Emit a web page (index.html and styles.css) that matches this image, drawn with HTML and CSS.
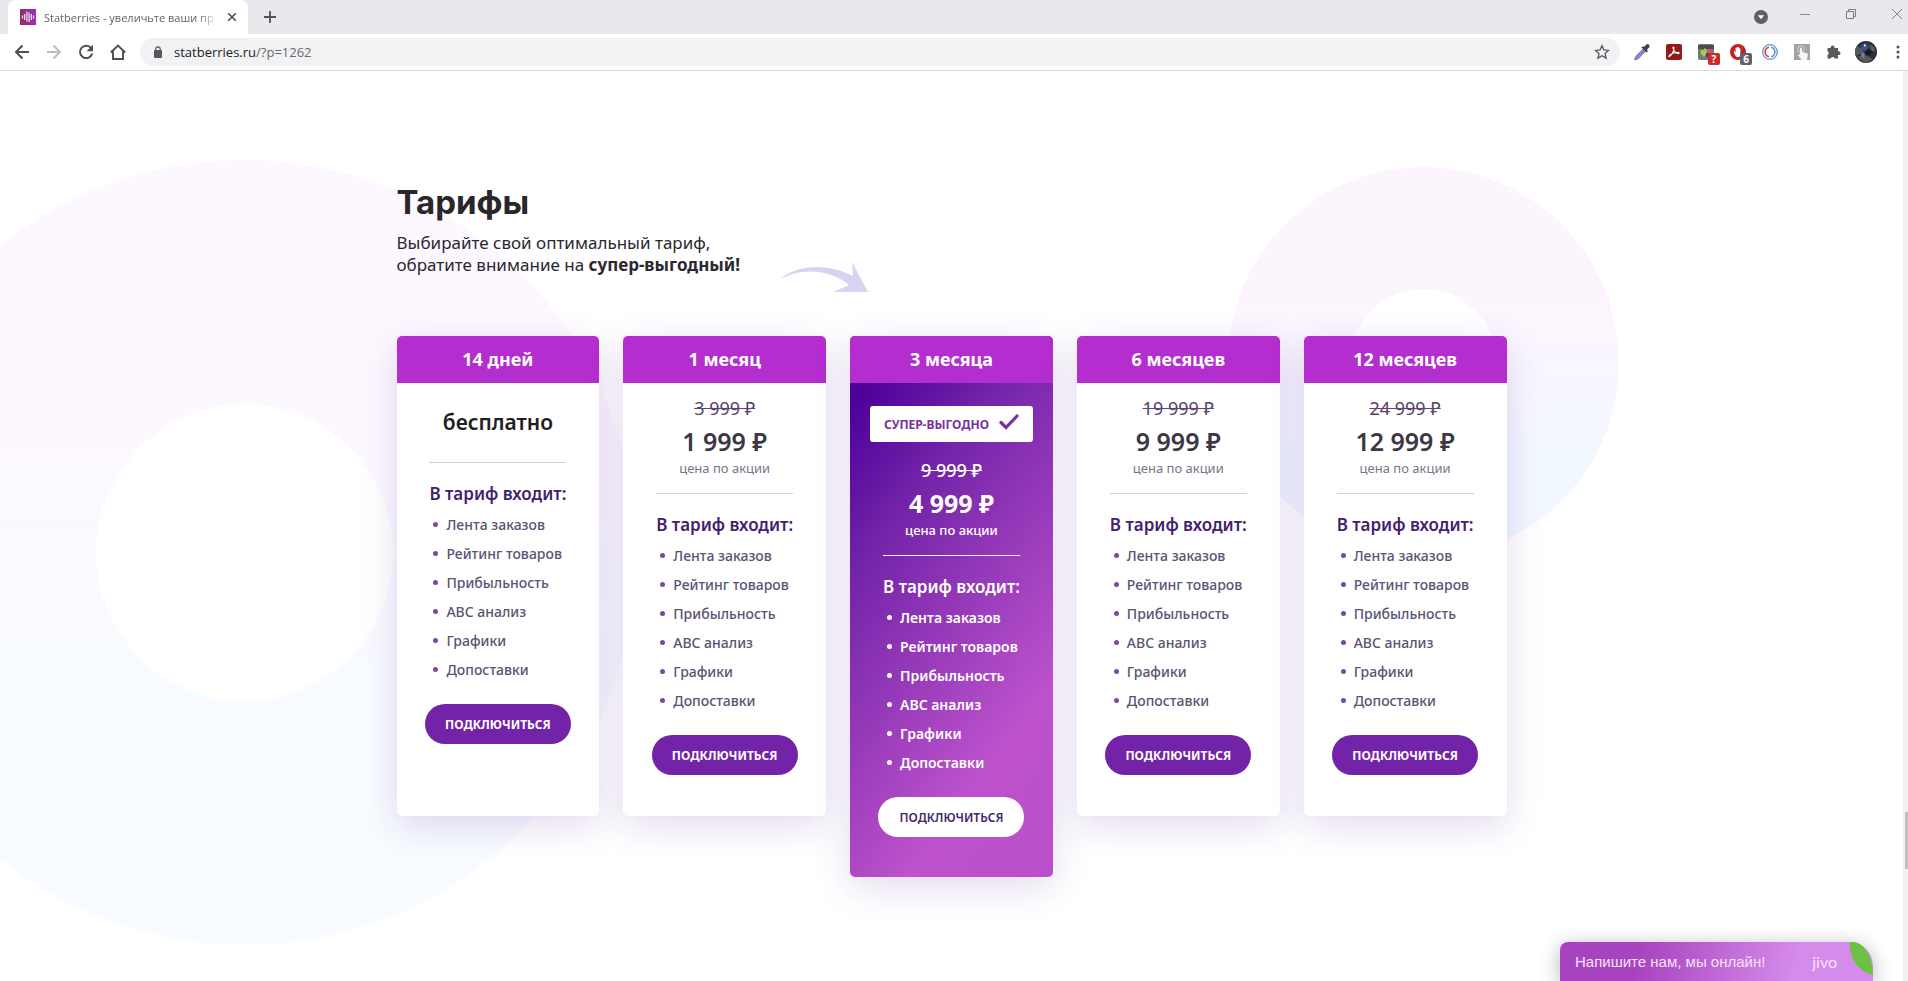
FILE: index.html
```html
<!DOCTYPE html>
<html lang="ru">
<head>
<meta charset="utf-8">
<title>Statberries - увеличьте ваши продажи</title>
<link rel="stylesheet" href="styles.css">
</head>
<body>
<div class="browser">
  <header class="chrome">
    <div class="tabstrip">
      <div class="tab">
        <svg class="favicon" width="16" height="16" viewBox="0 0 16 16"><defs><linearGradient id="fav" x1="0" x2="1"><stop offset="0" stop-color="#8a2f62"/><stop offset="1" stop-color="#a32bc4"/></linearGradient></defs><rect width="16" height="16" fill="url(#fav)"/><path d="M2.500 6.500v3M4.700 5v6M6.900 2.500v10M9.100 3.500v9.500M11.300 5v6M13.500 6.500v3" stroke="#f3d9f3" stroke-width="1.300"/></svg>
        <span class="tab-title">Statberries - увеличьте ваши пр</span>
        <button class="plain" aria-label="Закрыть вкладку"><svg width="10" height="10" viewBox="0 0 10 10"><path d="M1.200 1.200l7.600 7.600M8.800 1.200l-7.600 7.600" stroke="#4b4d51" stroke-width="1.600"/></svg></button>
      </div>
      <button class="plain new-tab" aria-label="Новая вкладка"><svg width="12" height="12" viewBox="0 0 12 12"><path d="M6 0v12M0 6h12" stroke="#505256" stroke-width="1.800"/></svg></button>
      <div class="window-buttons">
        <button class="plain search-tabs" aria-label="Поиск вкладок"><svg width="14" height="14" viewBox="0 0 14 14"><circle cx="7" cy="7" r="7" fill="#5f6064"/><path d="M3.800 5.200h6.400L7 9.300z" fill="#fff"/></svg></button>
        <button class="plain window-button" aria-label="Свернуть"><svg width="10" height="10" viewBox="0 0 10 10"><path d="M0 5.500h10" stroke="#8a8b8f"/></svg></button>
        <button class="plain window-button" aria-label="Развернуть"><svg width="10" height="10" viewBox="0 0 10 10"><path d="M.5 2.500h7v7h-7zM2.500 2.500v-2h7v7h-2" fill="none" stroke="#7c7d81"/></svg></button>
        <button class="plain window-button" aria-label="Закрыть"><svg width="10" height="10" viewBox="0 0 10 10"><path d="M0 0l10 10M10 0L0 10" stroke="#808185"/></svg></button>
      </div>
    </div>
    <div class="toolbar">
      <button class="plain nav" aria-label="Назад"><svg width="16" height="16" viewBox="0 0 16 16"><path d="M15 8H2M8.500 1.500L2 8l6.500 6.500" fill="none" stroke="#4d4f53" stroke-width="2"/></svg></button>
      <button class="plain nav" aria-label="Вперёд"><svg width="16" height="16" viewBox="0 0 16 16"><path d="M1 8h13M7.500 1.500L14 8l-6.500 6.500" fill="none" stroke="#bcbdc0" stroke-width="2"/></svg></button>
      <button class="plain nav" aria-label="Обновить"><svg width="16" height="16" viewBox="0 0 16 16"><path d="M13.200 4.200A6.200 6.200 0 1 0 14.200 9.500" fill="none" stroke="#4d4f53" stroke-width="2"/><path d="M15 .8v6.400H8.600z" fill="#4d4f53"/></svg></button>
      <button class="plain nav" aria-label="Домой"><svg width="16" height="16" viewBox="0 0 16 16"><path d="M.8 8.500L8 1.500l7.200 7M3 7v8h10V7" fill="none" stroke="#4d4f53" stroke-width="1.900"/></svg></button>
      <div class="omnibox">
        <svg width="10" height="12" viewBox="0 0 10 12"><rect x="1" y="4" width="8" height="8" rx="1" fill="#55575b"/><path d="M2.800 5V3a2.200 2.200 0 0 1 4.400 0v2" fill="none" stroke="#55575b" stroke-width="1.200"/></svg>
        <span class="url"><span class="host">statberries.ru</span>/?p=1262</span>
        <button class="plain" aria-label="Добавить в закладки"><svg width="16" height="16" viewBox="0 0 16 16"><path d="M8 1.700l1.900 4.300 4.600.4-3.500 3.100 1.100 4.600L8 11.700l-4.100 2.400L5 9.500 1.500 6.400l4.600-.4z" fill="none" stroke="#55575b" stroke-width="1.300"/></svg></button>
      </div>
      <div class="extensions">
        <button class="plain ext" aria-label="Пипетка"><svg width="18" height="18" viewBox="0 0 18 18"><path d="M10 6l2.500 2.500L5 16l-3 1-.5-.5L2.500 13.500z" fill="#8a86d4" stroke="#6d6aa5" stroke-width=".7"/><path d="M8.500 4.500l5 5 1.500-1.500-1.200-1.200 2.400-2.400a2 2 0 0 0-2.800-2.800L11 4 10 3z" fill="#3f4148"/></svg></button>
        <button class="plain ext" aria-label="Acrobat"><svg width="16" height="16" viewBox="0 0 16 16"><rect width="16" height="16" rx="2" fill="#951a17"/><path d="M3 12.500c2.500-1 5-5 5-8.500 0-1.300-1.200-1.200-1 0 .4 2.800 3 5.600 5.300 5.600 1.300 0 1-1.200-.4-1.200-2.800 0-6 .9-8 2.600-1.100 1-1.300 1.600-.9 1.500z" fill="none" stroke="#fff" stroke-width="1.100"/></svg></button>
        <button class="plain ext" aria-label="Расширение"><svg width="16" height="16" viewBox="0 0 16 16"><rect width="16" height="16" rx="2" fill="#77797a"/><rect y="1" width="16" height="4" fill="#4c4d50"/><path d="M3 6h3V4.500h2V6h1v5H7v1.500H5V11H3z" fill="#9bd238"/><rect x="9" y="5" width="4" height="4" fill="#e64a6a"/><rect x="8" y="9" width="5" height="4" fill="#3a36b0"/></svg><span class="count count-red">?</span></button>
        <button class="plain ext" aria-label="AdBlock"><svg width="16" height="16" viewBox="0 0 16 16"><circle cx="8" cy="8" r="8" fill="#c52125"/><path d="M5 11L3.500 7.500l1-.4L5.500 9V4h1.200v3.500V3h1.300v4.500V3.300h1.200V8V4.500h1.200V10L9.500 13H6.500z" fill="#fff"/></svg><span class="count">6</span></button>
        <button class="plain ext" aria-label="Синхронизация"><svg width="16" height="16" viewBox="0 0 16 16"><circle cx="8" cy="8" r="7.300" fill="none" stroke="#5e9ac9" stroke-width="1.300"/><path d="M7 3.300a4.800 4.800 0 0 0 0 9.400" fill="none" stroke="#d9384a" stroke-width="1.500"/><path d="M9 12.700a4.800 4.800 0 0 0 0-9.400" fill="none" stroke="#6d8fc6" stroke-width="1.500"/></svg></button>
        <button class="plain ext" aria-label="Касание"><svg width="16" height="16" viewBox="0 0 16 16"><rect width="16" height="16" fill="#a3a3a3"/><circle cx="7" cy="5" r="3.300" fill="none" stroke="#d5d5d5"/><path d="M6 4.500a1 1 0 0 1 2 0V8l5 1.300c.8.300 1 .9.800 1.700L13 16H7.500L4 11l1-.8 1 .6z" fill="#f5f5f5"/></svg></button>
        <button class="plain ext" aria-label="Расширения"><svg width="16" height="16" viewBox="0 0 16 16"><path d="M1.500 4h3.300a1.900 1.900 0 1 1 3.600 0H12v3.400a1.900 1.900 0 1 1 0 3.600v3.500H8.700a2 2 0 0 0-3.800 0H1.500v-3.600a2 2 0 0 0 0-3.700z" fill="#57595d"/></svg></button>
        <button class="plain ext" aria-label="Профиль"><svg width="22" height="22" viewBox="0 0 22 22"><defs><clipPath id="av"><circle cx="11" cy="11" r="11"/></clipPath></defs><g clip-path="url(#av)"><rect width="22" height="22" fill="#2b3038"/><path d="M0 5l7 2 2 5-9 3z" fill="#4d5a60"/><path d="M6 4l5-2 3 4-3 4-4-1z" fill="#3d4f90"/><path d="M9 3l2 1-1 2-1-1z" fill="#dfe4ef"/><path d="M12 8l5 2-2 5-5-2z" fill="#171a20"/><path d="M14 3l5 3 1 5-4-2z" fill="#56636a"/><path d="M3 15l7-1 8 4-6 4-7-3z" fill="#5d5a55"/><path d="M7 11l3 2-1 4-3-2z" fill="#6a82bb"/></g></svg></button>
      </div>
      <button class="plain menu" aria-label="Меню"><svg width="4" height="14" viewBox="0 0 4 14"><circle cx="2" cy="2" r="1.500" fill="#505256"/><circle cx="2" cy="7" r="1.500" fill="#505256"/><circle cx="2" cy="12" r="1.500" fill="#505256"/></svg></button>
    </div>
  </header>

  <main class="page">
    <div class="ring ring-left"></div>
    <div class="ring ring-right"></div>

    <section class="pricing">
      <div class="intro">
        <div>
          <h1 class="title">Тарифы</h1>
          <p class="lead">Выбирайте свой оптимальный тариф,<br>обратите внимание на <strong>супер-выгодный!</strong></p>
        </div>
        <svg class="arrow" width="88" height="30" viewBox="0 0 88 30"><path d="M0 17C18 2 48 1 73 14L72 0Q80 15 88 30H53L69 23C50 8 24 5 0 17z" fill="#d8d3f0"/></svg>
      </div>

      <div class="plans">
        <article class="plan">
          <h2 class="plan-name">14 дней</h2>
          <div class="plan-body">
            <p class="free">бесплатно</p>
            <div class="features">
              <h3 class="features-title">В тариф входит:</h3>
              <ul class="feature-list"><li>Лента заказов</li><li>Рейтинг товаров</li><li>Прибыльность</li><li>ABC анализ</li><li>Графики</li><li>Допоставки</li></ul>
            </div>
            <button class="connect">ПОДКЛЮЧИТЬСЯ</button>
          </div>
        </article>
        <article class="plan">
          <h2 class="plan-name">1 месяц</h2>
          <div class="plan-body">
            <div class="price"><s class="old">3 999 ₽</s><strong class="new">1 999 ₽</strong><span class="note">цена по акции</span></div>
            <div class="features">
              <h3 class="features-title">В тариф входит:</h3>
              <ul class="feature-list"><li>Лента заказов</li><li>Рейтинг товаров</li><li>Прибыльность</li><li>ABC анализ</li><li>Графики</li><li>Допоставки</li></ul>
            </div>
            <button class="connect">ПОДКЛЮЧИТЬСЯ</button>
          </div>
        </article>
        <article class="plan plan-best">
          <h2 class="plan-name">3 месяца</h2>
          <div class="plan-body">
            <div class="best"><span>СУПЕР-ВЫГОДНО</span><svg class="check" width="20" height="16" viewBox="0 0 20 16"><path d="M2 8.500l5 5L18 2" fill="none" stroke="#7b2fa0" stroke-width="3.200" stroke-linecap="round"/></svg></div>
            <div class="price"><s class="old">9 999 ₽</s><strong class="new">4 999 ₽</strong><span class="note">цена по акции</span></div>
            <div class="features">
              <h3 class="features-title">В тариф входит:</h3>
              <ul class="feature-list"><li>Лента заказов</li><li>Рейтинг товаров</li><li>Прибыльность</li><li>ABC анализ</li><li>Графики</li><li>Допоставки</li></ul>
            </div>
            <button class="connect">ПОДКЛЮЧИТЬСЯ</button>
          </div>
        </article>
        <article class="plan">
          <h2 class="plan-name">6 месяцев</h2>
          <div class="plan-body">
            <div class="price"><s class="old">19 999 ₽</s><strong class="new">9 999 ₽</strong><span class="note">цена по акции</span></div>
            <div class="features">
              <h3 class="features-title">В тариф входит:</h3>
              <ul class="feature-list"><li>Лента заказов</li><li>Рейтинг товаров</li><li>Прибыльность</li><li>ABC анализ</li><li>Графики</li><li>Допоставки</li></ul>
            </div>
            <button class="connect">ПОДКЛЮЧИТЬСЯ</button>
          </div>
        </article>
        <article class="plan">
          <h2 class="plan-name">12 месяцев</h2>
          <div class="plan-body">
            <div class="price"><s class="old">24 999 ₽</s><strong class="new">12 999 ₽</strong><span class="note">цена по акции</span></div>
            <div class="features">
              <h3 class="features-title">В тариф входит:</h3>
              <ul class="feature-list"><li>Лента заказов</li><li>Рейтинг товаров</li><li>Прибыльность</li><li>ABC анализ</li><li>Графики</li><li>Допоставки</li></ul>
            </div>
            <button class="connect">ПОДКЛЮЧИТЬСЯ</button>
          </div>
        </article>
      </div>
    </section>

    <div class="scrollbar"><div class="thumb"></div></div>

    <button class="chat">
      <span class="chat-text">Напишите нам, мы онлайн!</span>
      <span class="jivo">jivo</span>
      <svg class="leaf" width="23" height="33" viewBox="0 0 23 33"><path d="M0 0h4C15 2 22 13 23 33 9 30-1 18 0 0z" fill="#6cc144"/></svg>
    </button>
  </main>
</div>
</body>
</html>
```

FILE: styles.css
```css
* { box-sizing: border-box; }
body { margin: 0; font-family: "Noto Sans", "Open Sans", sans-serif; color: #2b2730; background: #fff; }
h1, h2, h3, p, ul { margin: 0; padding: 0; }
button { font: inherit; cursor: pointer; }
svg { display: block; }

.browser { display: flex; flex-direction: column; height: 100vh; }
.plain { display: flex; align-items: center; justify-content: center; padding: 0; border: 0; background: none; }

/* Browser frame */
.tabstrip { display: flex; align-items: center; height: 34px; padding: 0 6px 0 8px; background: #e8e9ed; }
.tab { display: flex; align-items: center; gap: 8px; align-self: stretch; width: 240px; padding: 0 11px 0 12px; border-radius: 8px 8px 0 0; background: #fff; }
.favicon { flex: none; }
.tab-title { flex: 1; white-space: nowrap; font: 11px "Open Sans", sans-serif; color: #606266; mask-image: linear-gradient(90deg, #000 88%, transparent); }
.new-tab { margin-left: 16px; }
.window-buttons { display: flex; align-items: center; gap: 36px; margin-left: auto; }
.search-tabs { margin-right: -4px; }
.window-button { margin-bottom: 6px; }
.toolbar { display: flex; align-items: center; height: 37px; padding-left: 6px; border-bottom: 1px solid #d9dadc; background: #fff; }
.nav { width: 32px; height: 32px; }
.omnibox { display: flex; align-items: center; gap: 11px; flex: 1; height: 28px; margin: 0 6px; padding: 0 10px 0 13px; border-radius: 14px; background: #f1f2f4; }
.url { flex: 1; font: 13px "Open Sans", sans-serif; color: #67696d; }
.host { color: #202124; }
.extensions { display: flex; }
.ext { position: relative; width: 32px; height: 32px; }
.count { position: absolute; right: 2px; bottom: 3px; width: 12px; border-radius: 2px; background: #5f6368; color: #fff; font: bold 10px/12px "Open Sans", sans-serif; }
.count-red { background: #cf2a27; }
.menu { width: 20px; margin-left: 6px; }

/* Pricing section */
.page { position: relative; flex: 1; overflow: hidden; padding-right: 5px; }
.ring { position: absolute; border-radius: 50%; background: linear-gradient(#fdf8ff 35%, #f8fbff 65%); }
.ring::after { content: ""; position: absolute; border-radius: 50%; background: #fff; }
.ring-left { left: -148px; top: 89px; width: 785px; height: 785px; }
.ring-left::after { inset: 244px; }
.ring-right { right: 289px; top: 96px; width: 391px; height: 391px; background: linear-gradient(#fdf5fe 35%, #f2f8ff 75%); }
.ring-right::after { inset: 122px; }

.pricing { position: relative; max-width: 1110px; margin: 0 auto; padding-top: 109px; }
.intro { display: flex; align-items: flex-end; gap: 40px; margin-bottom: 60px; }
.title { font: 700 33px/44px Inter, sans-serif; color: #2a2629; }
.lead { margin-top: 8px; font-size: 17px; line-height: 22px; }
.arrow { margin-bottom: -16px; }

.plans { display: grid; grid-template-columns: repeat(5, 1fr); gap: 24px; align-items: start; }
.plan { display: flex; flex-direction: column; min-height: 480px; overflow: hidden; border-radius: 5px; background: #fff; box-shadow: 0 10px 36px rgba(82, 32, 150, 0.16); }
.plan-name { background: #b42dce; color: #fff; font-size: 18px; line-height: 47px; font-weight: 700; text-align: center; }
.plan-body { display: flex; flex-direction: column; align-items: center; flex: 1; padding: 11px 16px 40px; }
.free { padding: 12px 0 24px; font-size: 21px; line-height: 32px; font-weight: 600; color: #211f24; }
.price { display: flex; flex-direction: column; align-items: center; color: #3d3745; padding-bottom: 16px; }
.old { font-size: 18px; line-height: 28px; color: #4f4658; text-decoration-color: #6b3a96; }
.new { font-size: 25px; line-height: 38px; font-weight: 600; }
.note { font-size: 13px; line-height: 17px; color: #77758a; }
.features { border-top: 1px solid #ccd0d9; padding-top: 17px; }
.features-title { margin-bottom: 2px; font-size: 17px; line-height: 28px; font-weight: 600; color: #43216f; }
.feature-list { list-style: none; }
.feature-list li { display: flex; align-items: center; gap: 8px; padding-left: 4px; font-size: 14px; line-height: 29px; font-weight: 500; color: #5b5372; }
.feature-list li::before { content: ""; width: 5px; height: 5px; border-radius: 50%; background: #774aa4; }
.connect { width: 146px; height: 40px; margin-top: 20px; padding: 0; border: 0; border-radius: 20px; background: #7323a7; color: #fff; font-size: 12px; font-weight: 700; }

.plan-best { background: linear-gradient(127deg, #4c0099 8%, #7324a9 30%, #bd52cc 76%, #b950c9 100%); }
.plan-best .plan-body, .plan-best .price, .plan-best .old, .plan-best .note, .plan-best .features-title, .plan-best li { color: #fff; }
.plan-best .old { text-decoration-color: #fff; }
.plan-best .old, .plan-best .note { font-weight: 500; }
.plan-best .new { font-weight: 700; }
.plan-best li { font-weight: 600; }
.plan-best li::before { background: #fff; }
.plan-best .features { border-color: #fff; }
.plan-best .connect { background: #fff; color: #43256c; font-weight: 600; }
.best { display: flex; align-items: center; justify-content: center; gap: 10px; width: 163px; height: 36px; margin: 12px 0 14px; border-radius: 3px; background: #fff; color: #7b2fa0; font-size: 12px; font-weight: 700; }
.check { margin-bottom: 4px; }

.scrollbar { position: absolute; top: 0; right: 0; bottom: 0; width: 5px; background: #f1f1f1; }
.thumb { width: 3px; height: 57px; margin: 741px 0 0 auto; background: #c1c1c1; }

/* Chat launcher */
.chat { position: absolute; right: 35px; bottom: 0; display: flex; align-items: center; width: 313px; height: 39px; padding: 0 36px 0 15px; border: 0; border-radius: 8px 24px 0 0; background: linear-gradient(100deg, #a843bf 25%, #d58bea 75%); color: #f6e4fa; box-shadow: 0 4px 20px rgba(0, 0, 0, 0.3); }
.chat-text { flex: 1; text-align: left; font: 15px "Liberation Sans", Arial, sans-serif; }
.jivo { font: 16px Lato, sans-serif; }
.leaf { position: absolute; right: 0; top: 0; }
```
